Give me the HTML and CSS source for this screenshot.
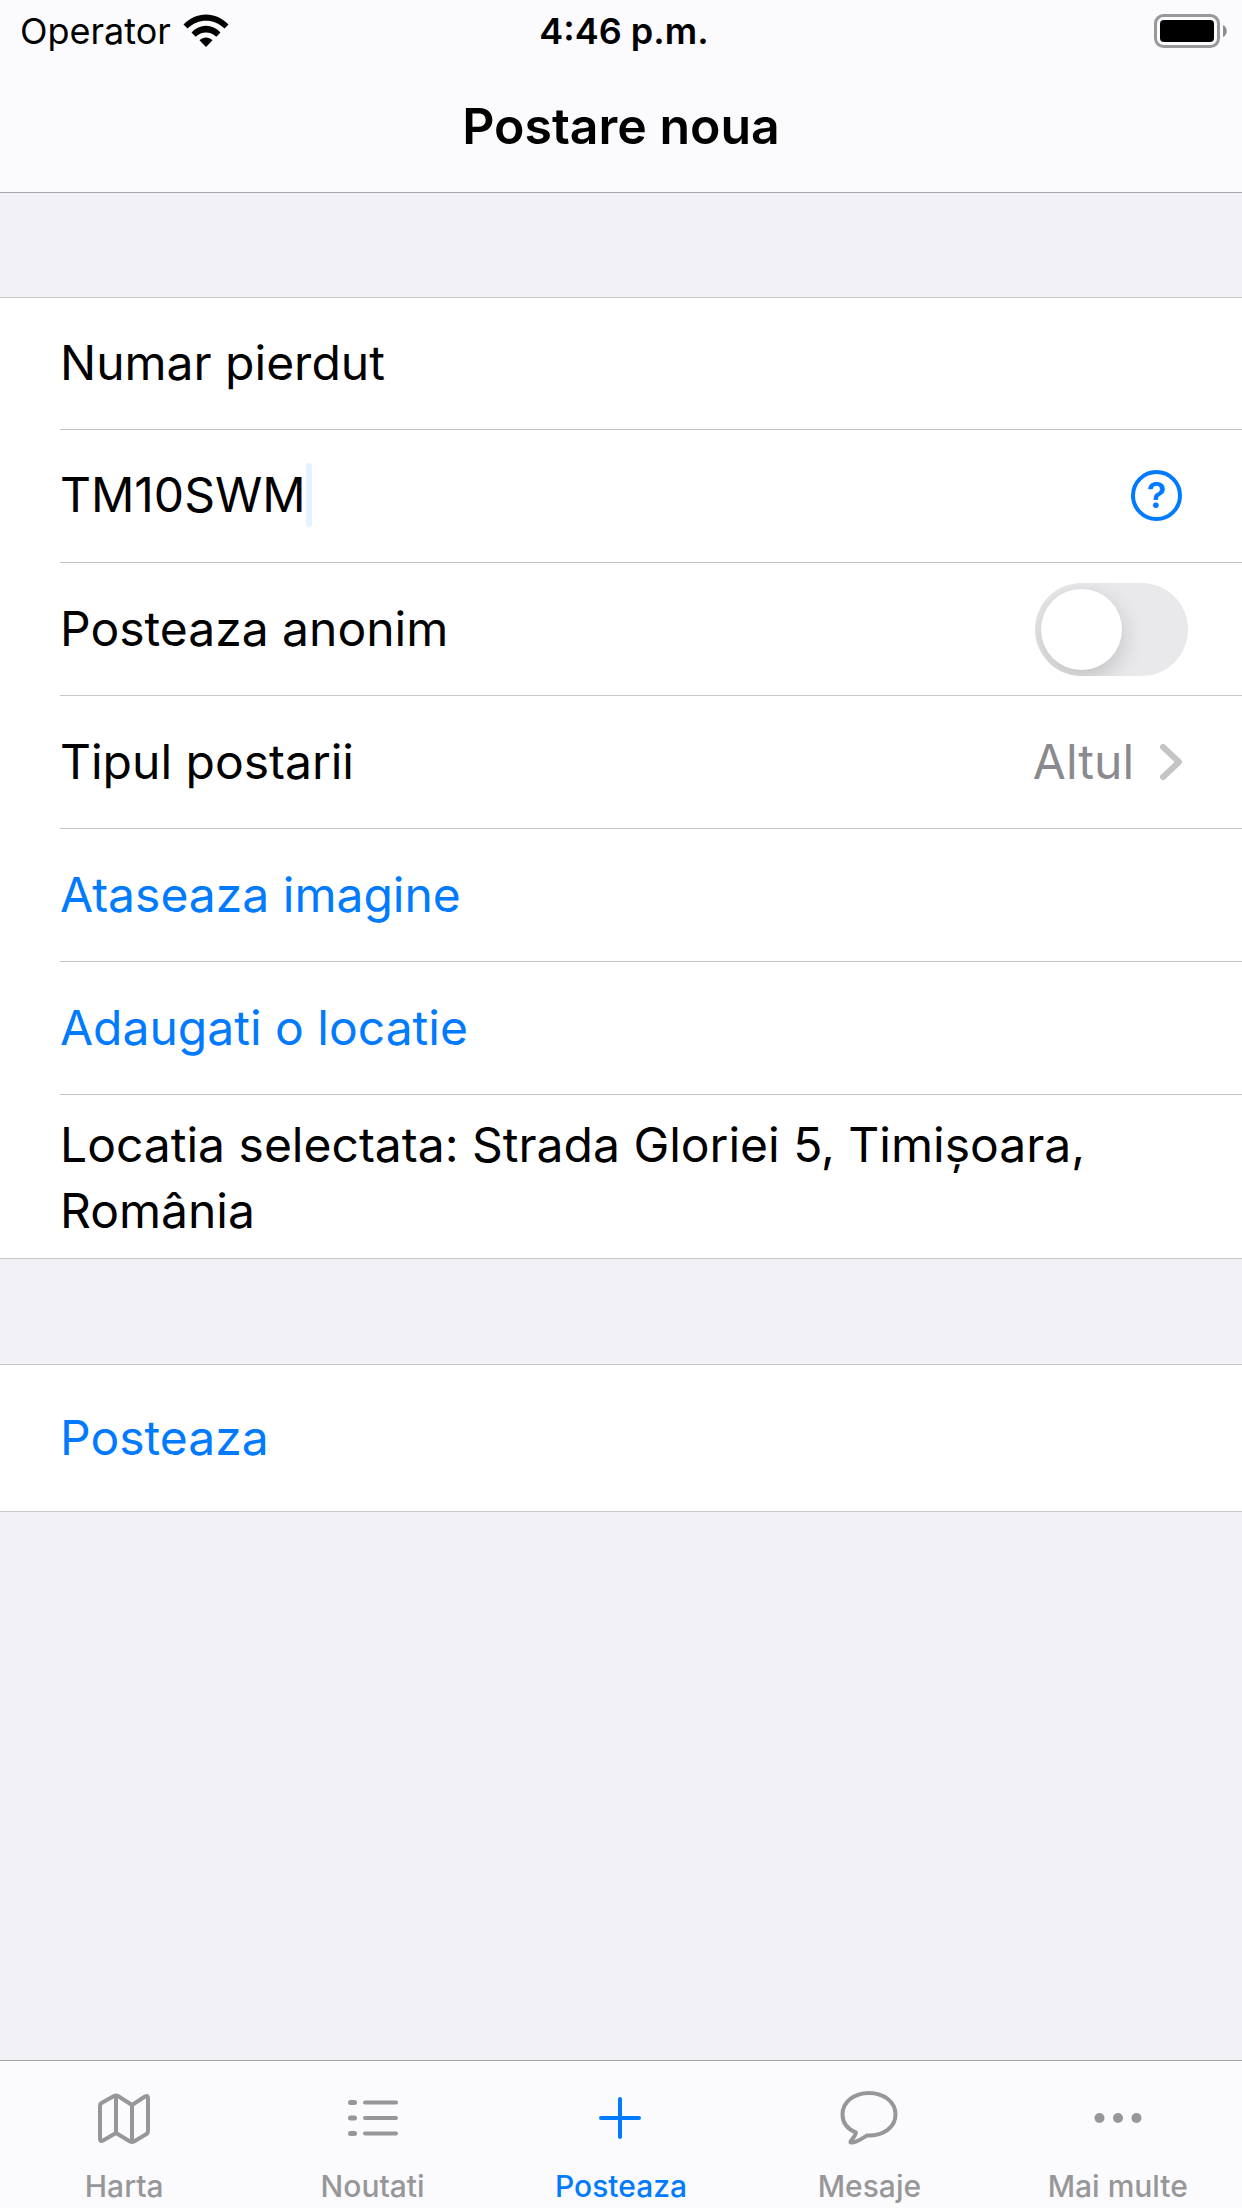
FILE: index.html
```html
<!DOCTYPE html>
<html lang="ro">
<head>
  <meta charset="utf-8">
  <meta name="viewport" content="width=device-width, initial-scale=1">
  <title>Postare noua</title>
  <link rel="stylesheet" href="styles.css">
</head>
<body>
  <header class="header">
    <div class="status">
      <div class="status-left">
        <span>Operator</span>
        <svg class="wifi" viewBox="0 0 46 34" aria-hidden="true">
          <path d="M0.500 10.500C13 -3 33 -3 45.500 10.500L41.500 14.500C31 4 15 4 4.500 14.500Z"/>
          <path d="M8.500 18.500C16.500 9.500 29.500 9.500 37.500 18.500L33.300 22.700C27.500 17 18.500 17 12.700 22.700Z"/>
          <path d="M16.500 26.200C20.500 22.500 25.500 22.500 29.500 26.200L23 33Z"/>
        </svg>
      </div>
      <time class="clock">4:46 p.m.</time>
      <svg class="battery" viewBox="0 0 74 34" aria-hidden="true">
        <rect x="1.500" y="1.500" width="63" height="31" rx="8" fill="none" stroke="#98989a" stroke-width="3"/>
        <rect x="6" y="6" width="54" height="22" rx="4"/>
        <path d="M69 11C74 13 74 21 69 23Z" fill="#8e8e90"/>
      </svg>
    </div>
    <h1 class="title">Postare noua</h1>
  </header>

  <form class="form">
    <ul class="group">
      <li class="row row-raised"><label for="plate">Numar pierdut</label></li>
      <li class="row row-raised">
        <div class="field">
          <input class="plate" id="plate" type="text" value="TM10SWM" size="7">
          <span class="caret"></span>
        </div>
        <button class="help" type="button" aria-label="Ajutor">?</button>
      </li>
      <li class="row row-switch">
        <label for="anonymous">Posteaza anonim</label>
        <input class="switch" id="anonymous" type="checkbox" role="switch">
      </li>
      <li class="row">
        <button class="picker" type="button">
          <span>Tipul postarii</span>
          <span class="picker-value">Altul
            <svg class="chevron" viewBox="0 0 22 38" aria-hidden="true"><path d="M3 4L19 19L3 34"/></svg>
          </span>
        </button>
      </li>
      <li class="row"><button class="action" type="button">Ataseaza imagine</button></li>
      <li class="row"><button class="action" type="button">Adaugati o locatie</button></li>
      <li class="row row-location"><p>Locatia selectata: Strada Gloriei 5, Timișoara, România</p></li>
    </ul>

    <div class="group">
      <div class="row row-submit"><button class="action" type="submit">Posteaza</button></div>
    </div>
  </form>

  <nav class="tabs">
    <a class="tab" href="#harta">
      <svg class="tab-icon" viewBox="0 0 60 60" aria-hidden="true">
        <path d="M6 17.500Q6 16 7.500 15L20 8Q22 7 24 8L38 17L51 8.500Q54 7 54 10V43Q54 45 52.500 46L40 53.500Q38 54.500 36 53.500L22 45L9 52.500Q6 54 6 51ZM22 8V45M38 17V53"/>
      </svg>
      <span>Harta</span>
    </a>
    <a class="tab" href="#noutati">
      <svg class="tab-icon" viewBox="0 0 60 60" aria-hidden="true">
        <path d="M22 14.500H53M22 30H53M22 45.500H53"/>
        <path class="bullets" d="M7.500 14.500H11.500M7.500 30H11.500M7.500 45.500H11.500"/>
      </svg>
      <span>Noutati</span>
    </a>
    <a class="tab tab-current" href="#posteaza" aria-current="page">
      <svg class="tab-icon" viewBox="0 0 60 60" aria-hidden="true"><path d="M29 11V49M10 30H48"/></svg>
      <span>Posteaza</span>
    </a>
    <a class="tab" href="#mesaje">
      <svg class="tab-icon" viewBox="0 0 60 60" aria-hidden="true">
        <path d="M30 5C45 5 56.500 14 56.500 26.500C56.500 39 45 48 28 47.500C22 51 17 55 12 54.500C9.500 54 16 50 17 44.500C8.500 41 3.500 34.500 3.500 26.500C3.500 14 15 5 30 5Z"/>
      </svg>
      <span>Mesaje</span>
    </a>
    <a class="tab" href="#mai-multe">
      <svg class="tab-icon" viewBox="0 0 60 60" aria-hidden="true">
        <g class="dots"><circle cx="11.500" cy="30" r="5"/><circle cx="30" cy="30" r="5"/><circle cx="48.500" cy="30" r="5"/></g>
      </svg>
      <span>Mai multe</span>
    </a>
  </nav>
</body>
</html>
```

FILE: styles.css
```css
* {
  box-sizing: border-box;
}

body {
  margin: 0;
  min-height: 100vh;
  display: flex;
  flex-direction: column;
  background: #f2f1f6;
  color: #000;
  font-family: Inter, "Liberation Sans", sans-serif;
  font-size: 48px;
  line-height: 66px;
}

button,
input {
  margin: 0;
  padding: 0;
  border: 0;
  background: none;
  color: inherit;
  font: inherit;
}

/* Header */

.header {
  background: #fbfbfd;
  border-bottom: 1px solid #a7a7ab;
}

.status {
  height: 62px;
  padding: 0 14px 0 20px;
  display: grid;
  grid-template-columns: 1fr auto 1fr;
  align-items: center;
  font-size: 36px;
  line-height: 44px;
}

.status-left {
  display: flex;
  align-items: center;
  gap: 12px;
}

.wifi {
  width: 46px;
  height: 34px;
}

.clock {
  font-weight: 600;
}

.battery {
  width: 74px;
  height: 34px;
  justify-self: end;
}

.title {
  margin: 0;
  padding: 31px 0 33px;
  font-size: 50px;
  line-height: 66px;
  font-weight: 600;
  text-align: center;
}

/* Form */

.form {
  flex: 1;
  padding: 104px 0;
  display: flex;
  flex-direction: column;
  gap: 105px;
}

.group {
  margin: 0;
  padding: 0 0 0 60px;
  list-style: none;
  background: #fff;
  border: solid #c6c6c8;
  border-width: 1px 0;
}

.row {
  min-height: 133px;
  padding-right: 60px;
  display: flex;
  align-items: center;
  justify-content: space-between;
  border-bottom: 1px solid #c6c6c8;
}

.row:first-child {
  min-height: 132px;
}

.row:last-child {
  border-bottom: 0;
}

.row-raised {
  padding-bottom: 2px;
}

.row-switch {
  padding-right: 54px;
}

.field {
  display: flex;
  align-items: center;
}

.plate {
  field-sizing: content;
  height: 66px;
  outline: none;
}

.caret {
  width: 6px;
  height: 64px;
  border-radius: 3px;
  background: #e5f2ff;
}

.help {
  width: 51px;
  height: 51px;
  border: 4px solid #007aff;
  border-radius: 50%;
  color: #007aff;
  font-size: 36px;
  line-height: 43px;
  font-weight: 600;
}

.switch {
  appearance: none;
  width: 153px;
  height: 93px;
  padding: 6px;
  border-radius: 47px;
  background: #e9e9eb;
  overflow: hidden;
}

.switch::before {
  content: "";
  display: block;
  width: 81px;
  height: 81px;
  border-radius: 50%;
  background: #fff;
  box-shadow: 0 8px 24px rgba(0, 0, 0, 0.18);
}

.switch:checked {
  background: #34c759;
}

.switch:checked::before {
  margin-left: auto;
}

.picker {
  flex: 1;
  display: flex;
  justify-content: space-between;
}

.picker-value {
  display: flex;
  align-items: center;
  gap: 26px;
  color: #8a8a8e;
}

.chevron {
  width: 22px;
  height: 38px;
  fill: none;
  stroke: #c4c4c6;
  stroke-width: 6px;
  stroke-linecap: round;
  stroke-linejoin: round;
}

.action {
  color: #007aff;
}

.row-location {
  padding-top: 17px;
  padding-bottom: 14px;
}

.row-location p {
  margin: 0;
}

.group .row-submit {
  min-height: 146px;
}

/* Tab bar */

.tabs {
  padding: 27px 0 4px;
  display: grid;
  grid-template-columns: repeat(5, 1fr);
  background: #fbfbfd;
  border-top: 1px solid #a7a7ab;
}

.tab {
  display: flex;
  flex-direction: column;
  align-items: center;
  gap: 20px;
  color: #979799;
  font-size: 30px;
  line-height: 36px;
  font-weight: 500;
  text-decoration: none;
}

.tab-current {
  color: #007aff;
}

.tab-icon {
  width: 60px;
  height: 60px;
  fill: none;
  stroke: currentColor;
  stroke-width: 4px;
  stroke-linecap: round;
  stroke-linejoin: round;
}

.bullets {
  stroke-width: 5px;
}

.dots {
  fill: currentColor;
  stroke: none;
}
```
